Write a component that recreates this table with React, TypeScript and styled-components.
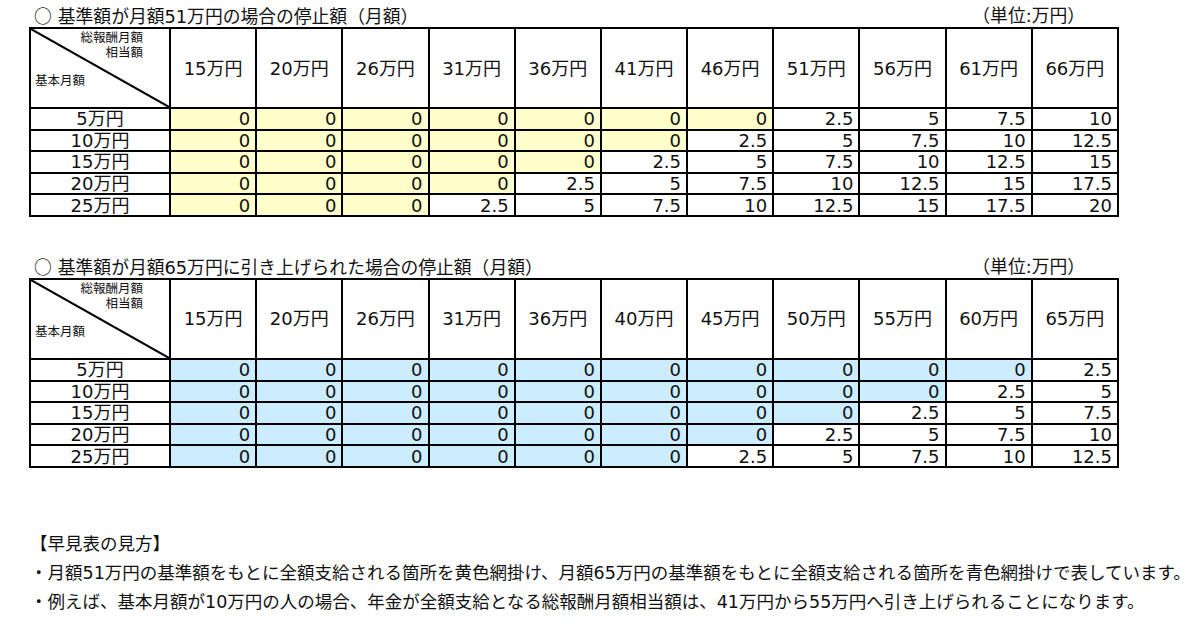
import React from "react";
import styled, { createGlobalStyle } from "styled-components";

const Global = createGlobalStyle`
  html, body { margin: 0; padding: 0; background: #fff; }
  body {
    font-family: "DejaVu Sans", "Noto Sans CJK JP", sans-serif;
    color: #111;
  }
`;

const Page = styled.div`
  width: 1200px;
  height: 630px;
  box-sizing: border-box;
  padding: 5px 0 0 29px;
  display: flex;
  flex-direction: column;
  overflow: hidden;
`;

const Section = styled.section<{ $gap: number }>`
  margin-top: ${(p) => p.$gap}px;
  width: 1090px;
`;

const TitleRow = styled.div`
  display: flex;
  justify-content: space-between;
  align-items: center;
  height: 22px;
  line-height: 22px;
  font-size: 17.8px;
  padding: 0 34px 0 5px;
  white-space: nowrap;
`;

const Mark = styled.span`
  font-family: "Noto Sans CJK JP", sans-serif;
  margin-right: 6px;
`;

const Grid = styled.table`
  border-collapse: collapse;
  table-layout: fixed;
  width: 1090px;
  font-size: 18px;
  line-height: 19px;
`;

const CornerCell = styled.th`
  position: relative;
  width: 138px;
  height: 78px;
  padding: 0;
  border: 2px solid #000;
  font-weight: normal;
  vertical-align: top;
`;

const Diagonal = styled.svg`
  position: absolute;
  inset: 0;
  width: 100%;
  height: 100%;
  pointer-events: none;
`;

const CornerText = styled.div`
  display: flex;
  flex-direction: column;
  height: 100%;
  font-family: "Noto Sans CJK JP", sans-serif;
  font-size: 12.5px;
  line-height: 15px;
`;

const CornerTop = styled.div`
  align-self: flex-end;
  text-align: right;
  padding: 0 26px 0 0;
`;

const CornerBottom = styled.div`
  text-align: left;
  padding: 13px 0 0 4px;
`;

const HeadCell = styled.th`
  border: 2px solid #000;
  padding: 0;
  font-weight: normal;
  font-size: 18px;
  text-align: center;
  vertical-align: middle;
`;

const RowLabel = styled.td`
  border: 2px solid #000;
  padding: 0;
  height: 19.6px;
  text-align: center;
  vertical-align: middle;
`;

const ValueCell = styled.td<{ $fill?: string }>`
  border: 2px solid #000;
  padding: 0 5px 0 0;
  height: 19.6px;
  text-align: right;
  vertical-align: middle;
  background: ${(p) => p.$fill ?? "#fff"};
`;

const Notes = styled.div`
  margin-top: 62px;
  padding-left: 1px;
  font-size: 17.5px;
  line-height: 29px;
  white-space: nowrap;
`;

const NoteLine = styled.p`
  margin: 0;
`;

type TableSpec = {
  title: string;
  threshold: number;
  cols: number[];
  fill: string;
  gap: number;
};

const bases = [5, 10, 15, 20, 25];

const tables: TableSpec[] = [
  {
    title: "基準額が月額51万円の場合の停止額（月額）",
    threshold: 51,
    cols: [15, 20, 26, 31, 36, 41, 46, 51, 56, 61, 66],
    fill: "#FFFFCC",
    gap: 0,
  },
  {
    title: "基準額が月額65万円に引き上げられた場合の停止額（月額）",
    threshold: 65,
    cols: [15, 20, 26, 31, 36, 40, 45, 50, 55, 60, 65],
    fill: "#CCECFF",
    gap: 39,
  },
];

function QuickTable({ spec }: { spec: TableSpec }) {
  return (
    <Section $gap={spec.gap}>
      <TitleRow>
        <span>
          <Mark>○</Mark>
          {spec.title}
        </span>
        <span>（単位:万円）</span>
      </TitleRow>
      <Grid>
        <thead>
          <tr>
            <CornerCell>
              <Diagonal viewBox="0 0 100 100" preserveAspectRatio="none">
                <line x1="0" y1="0" x2="100" y2="100" stroke="#000" strokeWidth="2" vectorEffect="non-scaling-stroke" />
              </Diagonal>
              <CornerText>
                <CornerTop>
                  総報酬月額
                  <br />
                  相当額
                </CornerTop>
                <CornerBottom>基本月額</CornerBottom>
              </CornerText>
            </CornerCell>
            {spec.cols.map((c) => (
              <HeadCell key={c}>{c}万円</HeadCell>
            ))}
          </tr>
        </thead>
        <tbody>
          {bases.map((b) => (
            <tr key={b}>
              <RowLabel>{b}万円</RowLabel>
              {spec.cols.map((c) => {
                const v = Math.max(0, (b + c - spec.threshold) / 2);
                return (
                  <ValueCell key={c} $fill={v === 0 ? spec.fill : undefined}>
                    {String(v)}
                  </ValueCell>
                );
              })}
            </tr>
          ))}
        </tbody>
      </Grid>
    </Section>
  );
}

export default function App() {
  return (
    <>
      <Global />
      <Page>
        {tables.map((t) => (
          <QuickTable key={t.threshold} spec={t} />
        ))}
        <Notes>
          <NoteLine>【早見表の見方】</NoteLine>
          <NoteLine>
            ・月額51万円の基準額をもとに全額支給される箇所を黄色網掛け、月額65万円の基準額をもとに全額支給される箇所を青色網掛けで表しています。
          </NoteLine>
          <NoteLine>
            ・例えば、基本月額が10万円の人の場合、年金が全額支給となる総報酬月額相当額は、41万円から55万円へ引き上げられることになります。
          </NoteLine>
        </Notes>
      </Page>
    </>
  );
}
